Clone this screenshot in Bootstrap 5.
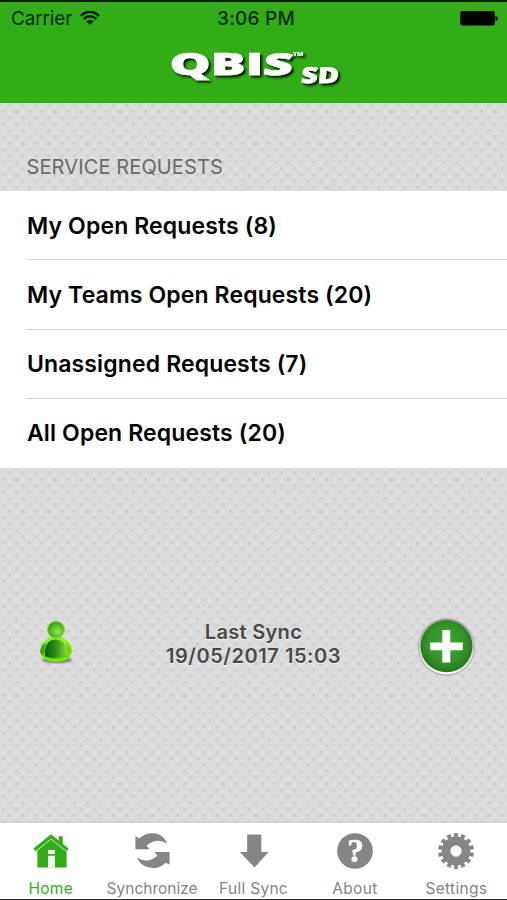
<!DOCTYPE html>
<html lang="en">
<head>
<meta charset="utf-8">
<meta name="viewport" content="width=device-width, initial-scale=1">
<title>QBIS SD</title>
<link href="https://cdn.jsdelivr.net/npm/bootstrap@5.3.0/dist/css/bootstrap.min.css" rel="stylesheet">
<style>
  body { font-family: Inter, "Liberation Sans", sans-serif; background: #000; overflow: hidden; }
  .screen { height: 900px; border-top: 2px solid #041c00; border-bottom: 1px solid #333; }
  .app-head { background: #33ad17; height: 101px; color: #0b2a05; }
  .status { height: 33px; font-size: 19px; line-height: 33px; padding: 0 9px 0 11px; }
  .status > * { flex: 1 1 0; white-space: nowrap; }
  .status .carrier { letter-spacing: -.15px; }
  .status .clock { font-weight: 500; letter-spacing: .2px; padding-left: 3px; }
  .wordmark { display: block; margin: 6px auto 0; }
  .wordmark text { font-family: "Open Sans", sans-serif; font-weight: 800; }
  .textured {
    background-color: #dadada;
    background-image:
      radial-gradient(circle, #c6c6c7 0, #cecece 1px, transparent 2.2px),
      radial-gradient(circle, #c6c6c7 0, #cecece 1px, transparent 2.2px),
      radial-gradient(circle, #e2e2e2 0, transparent 3px),
      radial-gradient(circle, #e2e2e2 0, transparent 3px);
    background-size: 12.95px 12.7px;
    background-position: -3px 2px, 3.5px 8.35px, -3px -2px, 3.5px 4.35px;
  }
  .section-title { height: 88px; padding: 0 0 11px 26.5px; font-size: 20px; line-height: 26px; color: #6a6a6c; letter-spacing: .12px; }
  .requests .list-group-item { height: 69.4px; padding: 1.5px 0 0; margin-left: 26px; padding-left: 1px; border: 0; border-bottom: 1.5px solid #d9d9db; font-size: 23px; font-weight: 600; color: #000; letter-spacing: .13px; background: #fff; border-radius: 0; }
  .requests .list-group-item:last-child { border-bottom: 0; padding-top: 0; }
  .requests { height: 277px; background: #fff; border-radius: 0; }
  .sync-row { padding: 148px 30px 0 37px; }
  .sync-label { font-size: 20px; line-height: 24px; font-weight: 600; color: #49494b; text-shadow: 0 1px 1px #f4f4f4; letter-spacing: .55px; padding-left: 15px; }
  .sync-label .caption-line { letter-spacing: .3px; }
  .tabs { height: 77px; background: #fff; border-top: 1px solid #d0d0d0; }
  .tabs a { color: #858585; font-size: 15.5px; line-height: 20px; text-decoration: none; padding-top: 8px; white-space: nowrap; flex: 1 1 0; min-width: 0; }
  .tabs a.active { color: #33ad17; }
  .tabs .spaced { letter-spacing: .3px; }
  .tabs svg { display: block; margin-bottom: 9px; }
</style>
<script src="https://cdn.jsdelivr.net/npm/bootstrap@5.3.0/dist/js/bootstrap.bundle.min.js"></script>
</head>
<body>
<div class="screen d-flex flex-column">
  <header class="app-head">
    <div class="status d-flex align-items-center">
      <div class="d-flex align-items-center">
        <span class="carrier">Carrier</span>
        <svg class="ms-2" width="20" height="16" viewBox="0 0 20 16" fill="none" stroke="#062203" stroke-width="2.4"><path d="M.8 4.800Q10-3.500 19.200 4.800M3.700 8Q10 2.700 16.300 8"/><path d="M6.300 10.300Q10 7.500 13.700 10.300L10 14Z" fill="#062203" stroke="none"/></svg>
      </div>
      <div class="clock text-center">3:06 PM</div>
      <div class="d-flex justify-content-end"><svg width="38" height="16" viewBox="0 0 38 16"><rect width="34.500" height="14.500" x=".3" y="0" rx="2" fill="#000"/><path d="M35.500 5Q38 5.500 38 7.500T35.500 10Z" fill="#000"/></svg></div>
    </div>
    <svg class="wordmark" width="180" height="54" viewBox="0 0 180 54" role="img" aria-label="QBIS SD">
      <defs><filter id="drop" x="-10%" y="-10%" width="125%" height="140%"><feDropShadow dx="2.200" dy="2.200" stdDeviation=".8" flood-color="#031c00" flood-opacity="1"/></filter></defs>
      <g fill="#fff" stroke="#fff" stroke-width=".5" filter="url(#drop)">
        <text x="5.500" y="34" font-size="30" textLength="94" lengthAdjust="spacingAndGlyphs">QBI</text>
        <text transform="translate(98 34) skewX(-7)" font-size="30" textLength="30" lengthAdjust="spacingAndGlyphs">S</text>
        <text x="129" y="15" font-size="5.500" stroke="none" textLength="10.500" lengthAdjust="spacingAndGlyphs">TM</text>
        <text transform="translate(136.500 42.300) skewX(-5)" font-size="22" textLength="38" lengthAdjust="spacingAndGlyphs">SD</text>
      </g>
    </svg>
  </header>

  <main class="textured flex-grow-1">
    <div class="section-title d-flex align-items-end">SERVICE REQUESTS</div>
    <div class="requests list-group list-group-flush">
      <a class="list-group-item d-flex align-items-center">My Open Requests (8)</a>
      <a class="list-group-item d-flex align-items-center">My Teams Open Requests (20)</a>
      <a class="list-group-item d-flex align-items-center">Unassigned Requests (7)</a>
      <a class="list-group-item d-flex align-items-center">All Open Requests (20)</a>
    </div>
    <div class="sync-row d-flex justify-content-between align-items-start">
      <svg class="mt-1" width="38" height="46" viewBox="0 0 38 46">
        <defs>
          <radialGradient id="skin" cx=".6" cy=".6" r=".7"><stop stop-color="#9be450"/><stop offset=".5" stop-color="#58c023"/><stop offset="1" stop-color="#2b970c"/></radialGradient>
          <linearGradient id="torso" x1="0" x2="1"><stop stop-color="#075c06"/><stop offset=".45" stop-color="#2b8d12"/><stop offset="1" stop-color="#8bd943"/></linearGradient>
          <filter id="haze"><feGaussianBlur stdDeviation="1.300"/></filter>
        </defs>
        <ellipse cx="20" cy="40" rx="15" ry="3" fill="#777" filter="url(#haze)"/>
        <path d="M3 31Q4 22 12 18Q19 15 26 18Q35 22 35 31Q35 41 19 41.500Q3 41 3 31Z" fill="#8cf407"/>
        <path d="M3 31Q4 25 9 23L7 36Q3 34 3 31Z" fill="#3fa61a"/>
        <path d="M29 23Q34 26 34 32L31 36Z" fill="#6bd21f"/>
        <path d="M8 37Q7 20 18 19.500Q30 20 31 36Q19 41 8 37Z" fill="url(#torso)"/>
        <path d="M7 37Q19 42 32 36" fill="none" stroke="#55df12" stroke-width="2"/>
        <circle cx="19" cy="9.800" r="8.500" fill="url(#skin)" stroke="#7ddc36" stroke-width=".8"/>
      </svg>
      <div class="sync-label text-center mt-1"><span class="caption-line">Last Sync</span><br>19/05/2017 15:03</div>
      <svg width="60" height="62" viewBox="0 0 60 62">
        <defs><radialGradient id="disc" cx=".5" cy=".45" r=".55"><stop stop-color="#42a531"/><stop offset=".65" stop-color="#339427"/><stop offset="1" stop-color="#247719"/></radialGradient><linearGradient id="rim" x2="0" y2="1"><stop stop-color="#999"/><stop offset=".5" stop-color="#ccc"/><stop offset="1" stop-color="#fff"/></linearGradient></defs>
        <circle cx="29.500" cy="31" r="28.700" fill="#b2b2b2"/><circle cx="29.500" cy="30.500" r="27.800" fill="url(#rim)"/>
        <circle cx="29.500" cy="30.300" r="26" fill="url(#disc)"/>
        <path d="M25.300 14H33.300V26.500H45.800V34.200H33.300V46.500H25.300V34.200H13.100V26.500H25.300Z" fill="#fff"/>
      </svg>
    </div>
  </main>

  <nav class="tabs d-flex">
    <a class="active spaced d-flex flex-column align-items-center"><svg width="38" height="40" viewBox="0 0 38 40" fill="currentColor"><path d="M5 20L19 8.500L35 20V37.500H5Z"/><path d="M27 5.500H31V17L27 13Z"/><path d="M2 20.800L19 7.300L36 20.800" fill="none" stroke="#b5e5aa" stroke-width="2.400"/><path d="M2 19.300L19 5.500L36 19.300" fill="none" stroke="currentColor" stroke-width="3.400"/><path d="M16 19.500H23V23.500H16ZM16 25.500H23V37.500H16Z" fill="#fff"/></svg>Home</a>
    <a class="d-flex flex-column align-items-center"><svg width="38" height="40" viewBox="0 0 38 40" fill="currentColor"><path d="M2 5.500L6 7.500Q13 1 23 2.500Q31 4 34.500 13Q24 6 13.500 15L16.500 18.800H2Z"/><path d="M37 34.500L33 32.500Q26 39.500 16 37.500Q7 35.500 3.500 27.500Q15 34 24.500 25.500L21.500 21.500H37Z"/></svg>Synchronize</a>
    <a class="d-flex flex-column align-items-center"><svg width="38" height="40" viewBox="0 0 38 40" fill="currentColor"><path d="M12 3.500H26.500V21.500H34L19.500 37.500L4.500 21.500H12Z"/></svg><span class="spaced">Full Sync</span></a>
    <a class="d-flex flex-column align-items-center"><svg width="38" height="40" viewBox="0 0 38 40" fill="currentColor"><circle cx="19" cy="20.500" r="18.300"/><text x="19.500" y="32" fill="#fff" stroke="#fff" stroke-width=".5" text-anchor="middle" font-family="Liberation Serif, serif" font-weight="700" font-size="34">?</text></svg><span class="spaced">About</span></a>
    <a class="d-flex flex-column align-items-center"><svg width="38" height="40" viewBox="0 0 38 40" fill="none" stroke="currentColor"><circle cx="19" cy="20.500" r="10.300" stroke-width="9"/><circle cx="19" cy="20.500" r="16.200" stroke-width="4.400" pathLength="140" stroke-dasharray="5.500 4.500" stroke-dashoffset="-32.250"/></svg><span class="spaced">Settings</span></a>
  </nav>
</div>
</body>
</html>
